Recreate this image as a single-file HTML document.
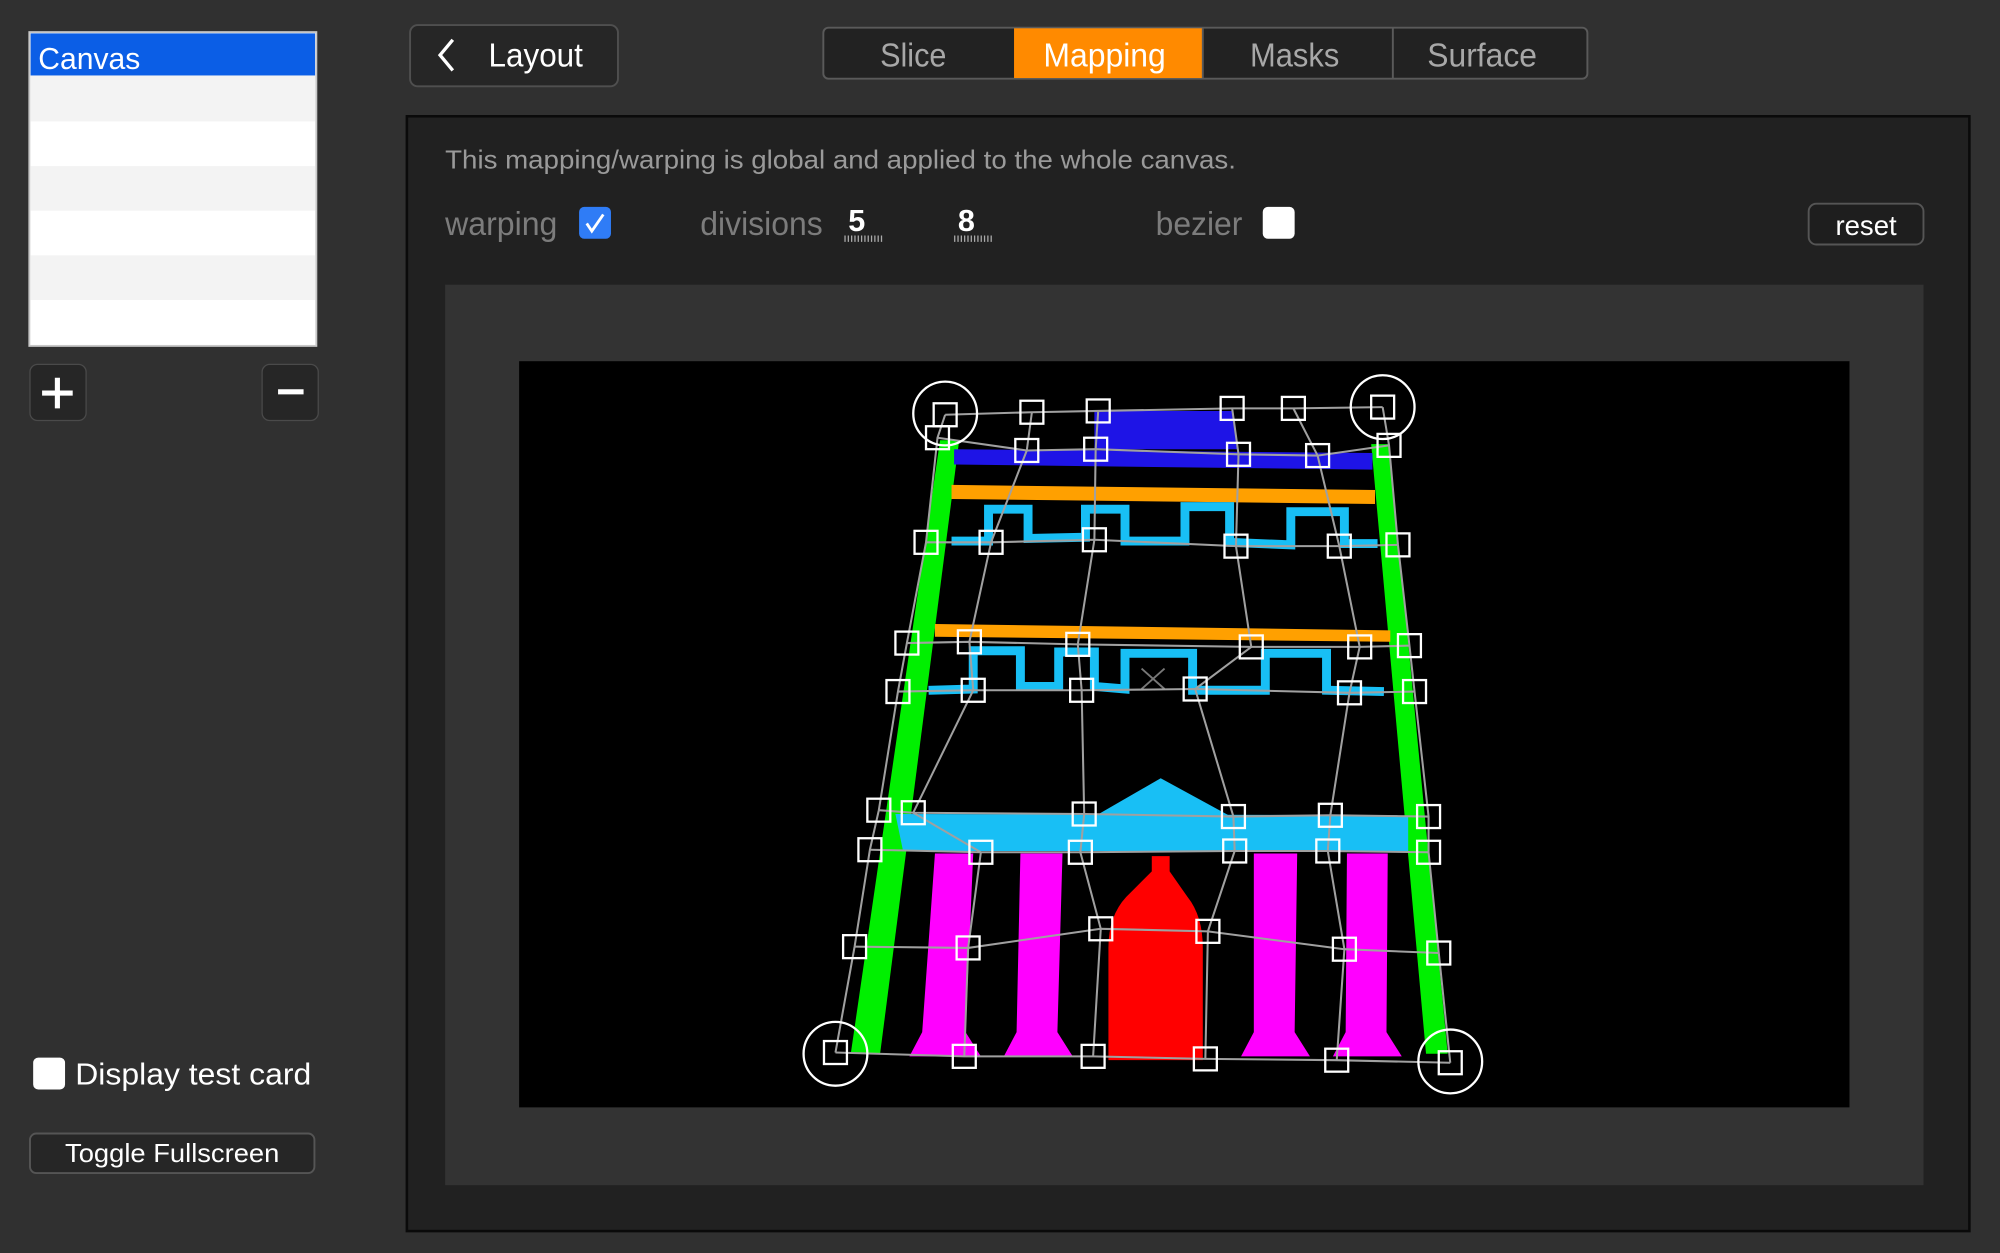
<!DOCTYPE html>
<html><head><meta charset="utf-8"><style>
html,body{margin:0;padding:0;background:#2f2f2f;width:2000px;height:1253px;overflow:hidden}
svg{display:block}
text{font-family:"Liberation Sans",sans-serif}
</style></head><body>
<svg width="2000" height="1253" viewBox="0 0 1568 982" xmlns="http://www.w3.org/2000/svg">
<rect width="1568" height="982" fill="#303030"/>
<!-- list -->
<rect x="23" y="25" width="225" height="246" fill="#fff" stroke="#c8c8c8" stroke-width="1.5"/>
<rect x="24" y="26" width="223" height="33" fill="#0b5ee6"/>
<text x="30" y="54" font-size="24" fill="#fff" textLength="80" lengthAdjust="spacingAndGlyphs">Canvas</text>
<rect x="24" y="59" width="223" height="36" fill="#f3f3f3"/>
<rect x="24" y="130" width="223" height="35" fill="#f3f3f3"/>
<rect x="24" y="200" width="223" height="35" fill="#f3f3f3"/>
<!-- +/- -->
<rect x="23.5" y="285.5" width="44" height="44" rx="6" fill="#262626" stroke="#4a4a4a"/>
<path d="M45 296v24M33 308h24" stroke="#fff" stroke-width="4"/>
<rect x="205.5" y="285.5" width="44" height="44" rx="6" fill="#262626" stroke="#4a4a4a"/>
<path d="M218 307h20" stroke="#fff" stroke-width="4"/>
<!-- Layout -->
<rect x="321.5" y="19.5" width="163" height="48" rx="6" fill="#262626" stroke="#4f4f4f" stroke-width="1.5"/>
<path d="M355 31l-10 12 10 12" stroke="#fff" stroke-width="2.6" fill="none"/>
<text x="383" y="52" font-size="26" fill="#fff" textLength="74" lengthAdjust="spacingAndGlyphs">Layout</text>
<!-- segmented -->
<rect x="645.5" y="21.5" width="599" height="40" rx="4" fill="#222" stroke="#5a5a5a" stroke-width="1.5"/>
<rect x="795" y="22" width="148" height="39" fill="#ff8a00"/>
<path d="M943 22v39M1092 22v39" stroke="#5a5a5a" stroke-width="1.5"/>
<text x="716" y="52" font-size="26" fill="#a8a8a8" text-anchor="middle" textLength="52" lengthAdjust="spacingAndGlyphs">Slice</text>
<text x="866" y="52" font-size="26" fill="#fff" text-anchor="middle" textLength="96" lengthAdjust="spacingAndGlyphs">Mapping</text>
<text x="1015" y="52" font-size="26" fill="#a8a8a8" text-anchor="middle" textLength="70" lengthAdjust="spacingAndGlyphs">Masks</text>
<text x="1162" y="52" font-size="26" fill="#a8a8a8" text-anchor="middle" textLength="86" lengthAdjust="spacingAndGlyphs">Surface</text>
<!-- main panel -->
<rect x="319" y="91" width="1225" height="874" fill="#212121" stroke="#0a0a0a" stroke-width="2"/>
<text x="349" y="132" font-size="20" fill="#9a9a9a" textLength="620" lengthAdjust="spacingAndGlyphs">This mapping/warping is global and applied to the whole canvas.</text>
<text x="349" y="184" font-size="26" fill="#7c7c7c" textLength="88" lengthAdjust="spacingAndGlyphs">warping</text>
<rect x="454" y="162" width="25" height="25" rx="4" fill="#2f7cf6"/>
<path d="M460 175l4 6 9-13" stroke="#fff" stroke-width="2.2" fill="none"/>
<text x="549" y="184" font-size="26" fill="#7c7c7c" textLength="96" lengthAdjust="spacingAndGlyphs">divisions</text>
<text x="665" y="181" font-size="24" font-weight="bold" fill="#fff">5</text>
<path d="M662 187h30" stroke="#aaa" stroke-width="5" stroke-dasharray="1 1.6"/>
<text x="751" y="181" font-size="24" font-weight="bold" fill="#fff">8</text>
<path d="M748 187h30" stroke="#aaa" stroke-width="5" stroke-dasharray="1 1.6"/>
<text x="906" y="184" font-size="26" fill="#7c7c7c" textLength="68" lengthAdjust="spacingAndGlyphs">bezier</text>
<rect x="990" y="162" width="25" height="25" rx="4" fill="#fff"/>
<rect x="1418" y="159.5" width="90" height="32" rx="6" fill="#1e1e1e" stroke="#555" stroke-width="1.5"/>
<text x="1463" y="184" font-size="22" fill="#fff" text-anchor="middle" textLength="48" lengthAdjust="spacingAndGlyphs">reset</text>
<!-- preview -->
<rect x="349" y="223" width="1159" height="706" fill="#333"/>
<rect x="407" y="283" width="1043" height="585" fill="#000"/>
<!-- artwork -->
<polygon points="737,345 752,345 690,826 667,826" fill="#00f000"/>
<polygon points="1075,348 1089,348 1135,826 1118,826" fill="#00f000"/>
<polygon points="858,322 966,322 970,352 858,352" fill="#1e14e6"/>
<polygon points="748,352 1076,355 1076,368 748,364" fill="#1e14e6"/>
<polygon points="746,380 1078,384 1078,395 746,391" fill="#ffa000"/>
<polygon points="733,489 1090,494 1090,503 733,499" fill="#ffa000"/>
<polyline points="746,424 775,424 775,399 806,399 806,422 851,421 851,399 882,399 882,424 929,424 929,397 964,397 964,425 1012,427 1012,401 1054,401 1054,426 1080,426" fill="none" stroke="#18bff5" stroke-width="7"/>
<polyline points="728,541 763,540 763,510 800,510 800,538 830,538 830,511 858,511 858,538 882,540 882,512 935,512 935,541 992,541 992,512 1040,512 1040,541 1085,542" fill="none" stroke="#18bff5" stroke-width="7"/>
<polygon points="910,610 965,640 858,640" fill="#18bff5"/>
<polygon points="702,638 1104,639 1104,667 708,667" fill="#18bff5"/>
<g fill="#ff00ff">
<path d="M733 669h30l-6 140 12 19h-56l10-19z"/>
<path d="M800 669h33l-4 140 12 19h-54l10-19z"/>
<path d="M983 669h34l-2 140 12 19h-54l10-19z"/>
<path d="M1056 669h32l-1 140 12 19h-54l10-19z"/>
</g>
<path d="M903 671h14v12l14 20q12 15 12 40v88h-74v-88q0-25 14-40l20-20z" fill="#ff0000"/>
<path d="M895 524l18 16M913 524l-18 16" stroke="#777" stroke-width="1.5"/>
<!-- grid lines -->
<g fill="none" stroke="#a0a0a0" stroke-width="1.6">
<polyline points="741,325 809,323 861,322 966,320 1014,320 1084,319"/>
<polyline points="735,343 805,353 859,352 971,356 1033,357 1089,349"/>
<polyline points="726,425 777,425 858,423 969,428 1050,428 1096,427"/>
<polyline points="711,504 760,503 845,505 981,507 1066,507 1105,506"/>
<polyline points="704,542 763,541 848,541 937,540 1058,543 1109,542"/>
<polyline points="689,635 716,637 850,638 967,640 1043,639 1120,640"/>
<polyline points="682,666 769,668 847,668 968,667 1041,667 1120,668"/>
<polyline points="670,742 759,743 863,728 947,730 1054,744 1128,747"/>
<polyline points="655,825 756,828 857,828 945,830 1048,831 1137,833"/>
<polyline points="741,325 735,343 726,425 711,504 704,542 689,635 682,666 670,742 655,825"/>
<polyline points="809,323 805,353 777,425 760,503 763,541 716,637 769,668 759,743 756,828"/>
<polyline points="861,322 859,352 858,423 845,505 848,541 850,638 847,668 863,728 857,828"/>
<polyline points="966,320 971,356 969,428 981,507 937,540 967,640 968,667 947,730 945,830"/>
<polyline points="1014,320 1033,357 1050,428 1066,507 1058,543 1043,639 1041,667 1054,744 1048,831"/>
<polyline points="1084,319 1089,349 1096,427 1105,506 1109,542 1120,640 1120,668 1128,747 1137,833"/>
</g>
<g fill="none" stroke="#fff" stroke-width="1.8">
<circle cx="741" cy="324" r="25"/><circle cx="1084" cy="319" r="25"/>
<circle cx="655" cy="826" r="25"/><circle cx="1137" cy="832" r="25"/>
<rect x="732" y="316" width="18" height="18"/><rect x="800" y="314" width="18" height="18"/><rect x="852" y="313" width="18" height="18"/><rect x="957" y="311" width="18" height="18"/><rect x="1005" y="311" width="18" height="18"/><rect x="1075" y="310" width="18" height="18"/>
<rect x="726" y="334" width="18" height="18"/><rect x="796" y="344" width="18" height="18"/><rect x="850" y="343" width="18" height="18"/><rect x="962" y="347" width="18" height="18"/><rect x="1024" y="348" width="18" height="18"/><rect x="1080" y="340" width="18" height="18"/>
<rect x="717" y="416" width="18" height="18"/><rect x="768" y="416" width="18" height="18"/><rect x="849" y="414" width="18" height="18"/><rect x="960" y="419" width="18" height="18"/><rect x="1041" y="419" width="18" height="18"/><rect x="1087" y="418" width="18" height="18"/>
<rect x="702" y="495" width="18" height="18"/><rect x="751" y="494" width="18" height="18"/><rect x="836" y="496" width="18" height="18"/><rect x="972" y="498" width="18" height="18"/><rect x="1057" y="498" width="18" height="18"/><rect x="1096" y="497" width="18" height="18"/>
<rect x="695" y="533" width="18" height="18"/><rect x="754" y="532" width="18" height="18"/><rect x="839" y="532" width="18" height="18"/><rect x="928" y="531" width="18" height="18"/><rect x="1049" y="534" width="18" height="18"/><rect x="1100" y="533" width="18" height="18"/>
<rect x="680" y="626" width="18" height="18"/><rect x="707" y="628" width="18" height="18"/><rect x="841" y="629" width="18" height="18"/><rect x="958" y="631" width="18" height="18"/><rect x="1034" y="630" width="18" height="18"/><rect x="1111" y="631" width="18" height="18"/>
<rect x="673" y="657" width="18" height="18"/><rect x="760" y="659" width="18" height="18"/><rect x="838" y="659" width="18" height="18"/><rect x="959" y="658" width="18" height="18"/><rect x="1032" y="658" width="18" height="18"/><rect x="1111" y="659" width="18" height="18"/>
<rect x="661" y="733" width="18" height="18"/><rect x="750" y="734" width="18" height="18"/><rect x="854" y="719" width="18" height="18"/><rect x="938" y="721" width="18" height="18"/><rect x="1045" y="735" width="18" height="18"/><rect x="1119" y="738" width="18" height="18"/>
<rect x="646" y="816" width="18" height="18"/><rect x="747" y="819" width="18" height="18"/><rect x="848" y="819" width="18" height="18"/><rect x="936" y="821" width="18" height="18"/><rect x="1039" y="822" width="18" height="18"/><rect x="1128" y="824" width="18" height="18"/>
</g>
<!-- bottom-left -->
<rect x="26" y="829" width="25" height="25" rx="4" fill="#fff"/>
<text x="59" y="850" font-size="24" fill="#fff" textLength="185" lengthAdjust="spacingAndGlyphs">Display test card</text>
<rect x="23.5" y="888.5" width="223" height="31" rx="5" fill="#262626" stroke="#555" stroke-width="1.5"/>
<text x="135" y="911" font-size="20" fill="#fff" text-anchor="middle" textLength="168" lengthAdjust="spacingAndGlyphs">Toggle Fullscreen</text>
</svg>
</body></html>
